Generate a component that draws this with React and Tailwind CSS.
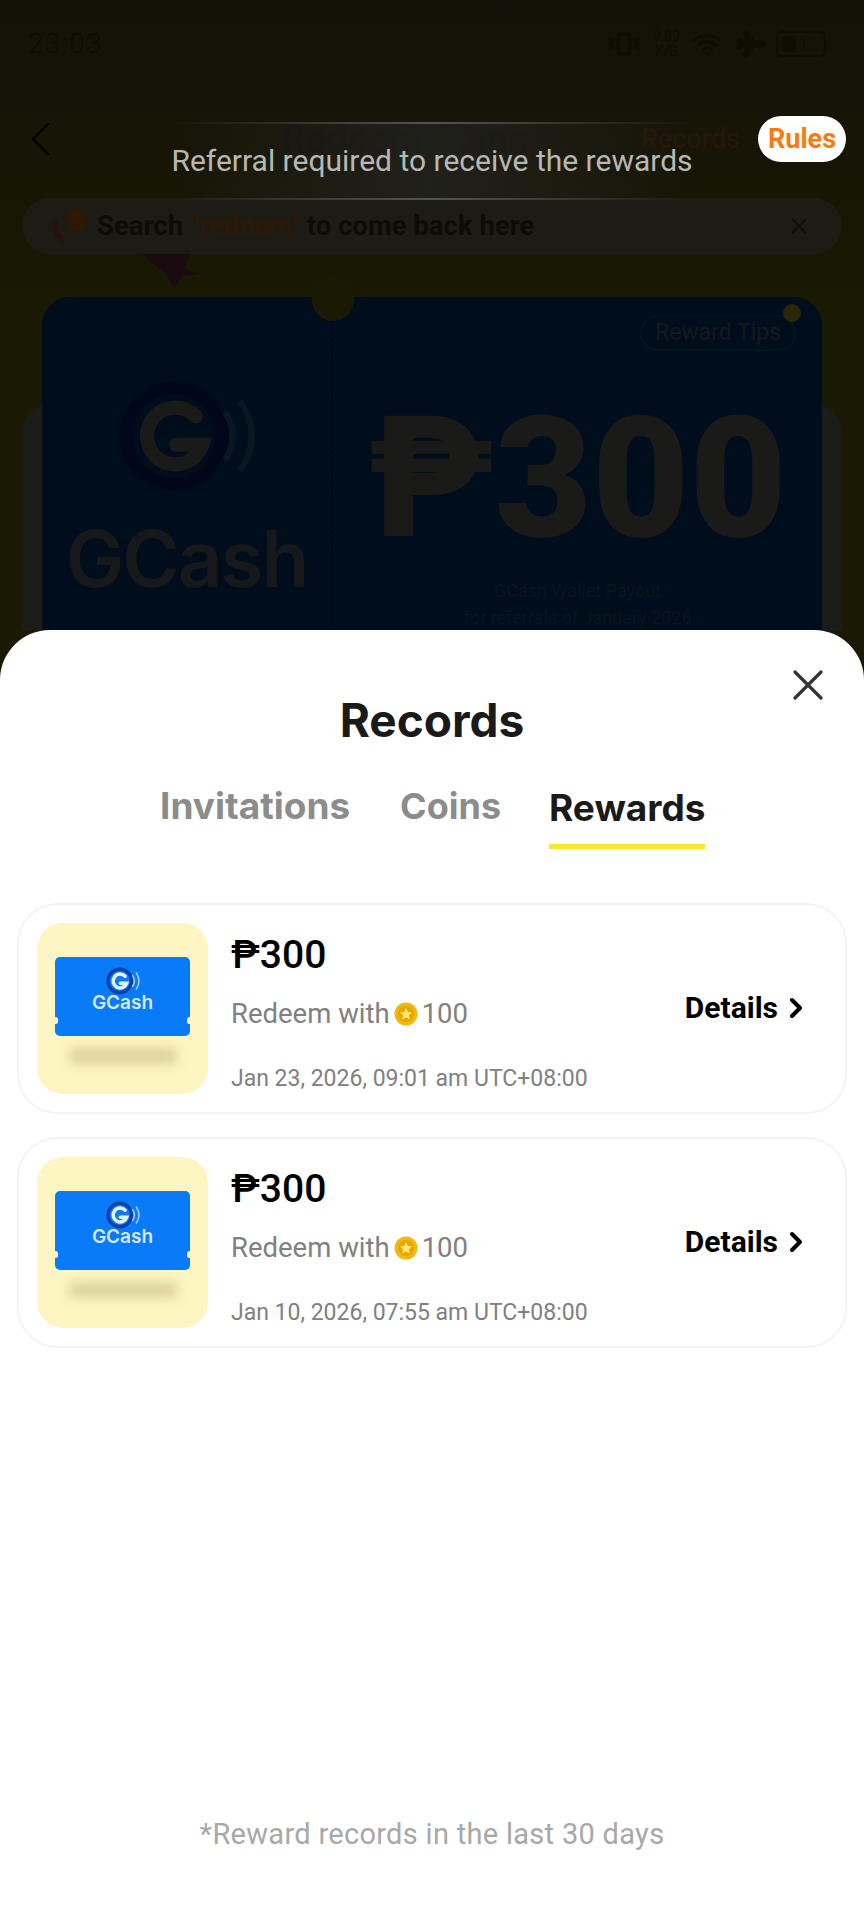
import { X, ChevronRight, Wifi, Plane, Vibrate } from "lucide-react";

const roboto = { fontFamily: "Roboto, sans-serif" };
const inter = { fontFamily: "Inter, sans-serif" };

function GLogo({ ring = "#00245a", mark = "#fff", waves = "#a9d0ff", className = "" }) {
  return (
    <svg viewBox="0 0 64 56" className={className} fill="none">
      <circle cx="26" cy="28" r="22" stroke={ring} strokeWidth="6" />
      <path d="M36 19a13 13 0 1 0 3 13H27" stroke={mark} strokeWidth="6.5" strokeLinecap="round" />
      <path d="M50 18a18 18 0 0 1 0 20" stroke={waves} strokeWidth="3" strokeLinecap="round" />
      <path d="M57 13a26 26 0 0 1 0 30" stroke={waves} strokeWidth="3" strokeLinecap="round" />
    </svg>
  );
}

function Coin() {
  return (
    <svg viewBox="0 0 24 24" className="mx-[4px] h-[24px] w-[24px] shrink-0">
      <circle cx="12" cy="12" r="11.5" fill="#f2b80f" />
      <circle cx="12" cy="12" r="8" fill="#e8a508" />
      <path d="M12 6l1.9 3.9 4.1.5-3 2.9.8 4.2-3.8-2-3.8 2 .8-4.2-3-2.9 4.1-.5z" fill="#ffe96b" />
    </svg>
  );
}

function Thumb() {
  return (
    <div className="flex h-[171px] w-[171px] shrink-0 flex-col items-center rounded-[26px] bg-[#fdf5c2] pt-[34px]">
      <div className="relative flex h-[79px] w-[135px] flex-col items-center rounded-[5px] bg-[#0a7bf8] pt-[9px]">
        <GLogo ring="#0b3fa8" mark="#e8f2ff" waves="#9cc9ff" className="h-[30px] w-[36px]" />
        <span className="-mt-[3px] text-[19px] leading-[20px] font-semibold text-[#d8e9ff]" style={inter}>
          GCash
        </span>
        <span className="absolute top-[60px] -left-[2px] h-[7px] w-[5px] rounded-full bg-[#fdf5c2]" />
        <span className="absolute top-[60px] -right-[2px] h-[7px] w-[5px] rounded-full bg-[#fdf5c2]" />
      </div>
      <div className="mt-[13px] h-[14px] w-[110px] rounded-full bg-[#d8cf98] blur-[6px]" />
    </div>
  );
}

function RecordCard({ date }) {
  return (
    <div className="flex h-[211px] items-center rounded-[40px] border-2 border-[#f4f4f4] pr-[33px] pl-[18px]">
      <Thumb />
      <div className="ml-[23px] flex h-[171px] flex-1 flex-col" style={roboto}>
        <div className="mt-[5px] text-[39px] leading-[54px] font-medium text-black">₱300</div>
        <div className="mt-[12px] flex items-center text-[27.5px] leading-[40px] text-[#808080]">
          Redeem with
          <Coin />
          100
        </div>
        <div className="mt-[30px] text-[23px] leading-[30px] text-[#808080]">{date}</div>
      </div>
      <div className="mb-[2px] flex items-center text-[30px] font-bold text-black" style={roboto}>
        Details
        <ChevronRight className="ml-[2px] h-[32px] w-[32px]" strokeWidth={3} />
      </div>
    </div>
  );
}

export default function App() {
  return (
    <div className="relative flex h-[1920px] w-[864px] flex-col overflow-hidden bg-[#1a1903]" style={roboto}>
      {/* dimmed page behind the sheet */}
      <div className="h-[630px] shrink-0 overflow-hidden bg-gradient-to-b from-[#131208] via-[#1a1903] to-[#1a1903]">
        <div className="flex h-[88px] items-center justify-between pr-[38px] pl-[28px] text-[#0e0d03]">
          <span className="text-[28px] font-light tracking-wider">23:03</span>
          <div className="flex items-center gap-[12px]">
            <Vibrate className="h-[34px] w-[34px]" strokeWidth={2.5} />
            <div className="text-center text-[14px] leading-[15px]">
              9.89
              <br />
              K/S
            </div>
            <Wifi className="h-[30px] w-[30px]" strokeWidth={2.5} />
            <Plane className="h-[30px] w-[30px] rotate-45" fill="#0e0d03" />
            <div className="flex h-[26px] w-[50px] items-center rounded-[6px] border-2 border-[#0e0d03] px-[4px] text-[15px]">
              <span className="mr-[3px] h-[16px] w-[14px] rounded-[2px] bg-[#0e0d03]" />1
            </div>
          </div>
        </div>

        <div className="mt-[14px] flex h-[74px] items-center pr-[18px] pl-[30px]">
          <svg viewBox="0 0 21 36" className="h-[36px] w-[21px]" fill="none" stroke="#000" strokeWidth="2.4">
            <path d="M19 2L3 18l16 16" />
          </svg>
          <div className="ml-[230px] text-[38px] font-bold whitespace-nowrap text-[#12110a]">Redeem Coins</div>
          <div className="ml-auto flex items-center gap-[18px]">
            <span className="text-[27px] font-medium text-[#241806]">Records</span>
            <div className="flex h-[46px] w-[88px] items-center justify-center rounded-full bg-white text-[27px] font-bold text-[#f57c0f]">
              Rules
            </div>
          </div>
        </div>

        <div className="mx-[22px] mt-[22px] flex h-[56px] items-center rounded-full bg-[#1c1c14] pr-[30px] pl-[26px] text-[27.5px] font-bold text-[#0d0c04]">
          <svg viewBox="0 0 44 42" className="mr-[9px] h-[38px] w-[40px]">
            <path d="M28 2c8 0 14 8 13 16-1 6-9 9-17 7C18 16 20 2 28 2z" fill="#2d1a05" />
            <path d="M6 16c-3 8 0 16 10 24 3-2 3-5 0-8C10 28 9 22 12 14z" fill="#2a0f0a" />
          </svg>
          Search&nbsp;<span className="text-[#2e1808]">"redeem"</span>&nbsp;to come back here
          <X className="ml-auto h-[26px] w-[26px] text-[#0f0f0a]" />
        </div>

        <div className="relative mx-[22px] mt-[43px] h-[400px]">
          <svg viewBox="0 0 60 34" className="absolute -top-[43px] left-[120px] h-[34px] w-[60px]">
            <path d="M0 0h48l-6 14 16 6-18 2-8 12-8-14z" fill="#1a0a12" />
          </svg>
          <div className="absolute inset-x-0 top-[106px] bottom-0 rounded-t-[30px] bg-[#1b1b18]" />
          <div className="absolute inset-x-[20px] top-0 bottom-0 flex overflow-hidden rounded-t-[28px] bg-[#000d1c]">
            <div className="flex w-[291px] flex-col items-center border-r-2 border-dashed border-[#00060f] pt-[78px]">
              <GLogo ring="#00071b" mark="#1a1a18" waves="#0a1722" className="h-[122px] w-[140px]" />
              <div className="mt-[18px] text-[78px] leading-[88px] font-semibold tracking-tight text-[#17181a]" style={inter}>
                GCash
              </div>
            </div>
            <div className="flex flex-1 flex-col items-center">
              <div className="mt-[18px] mr-[26px] flex h-[36px] w-[156px] items-center justify-center self-end rounded-full border-2 border-[#08131f] text-[23px] text-[#15181c]">
                Reward Tips
              </div>
              <div className="mt-[30px] text-[168px] leading-[196px] font-black text-[#1a1a18]">₱300</div>
              <div className="text-center text-[18px] leading-[27px] text-[#0c141d]">
                GCash Wallet Payout
                <br />
                for referrals of January 2026
              </div>
            </div>
          </div>
          <div className="absolute top-[-22px] left-[290px] h-[46px] w-[42px] rounded-full bg-[#1a1903]" />
          <div className="absolute top-[7px] right-[41px] h-[18px] w-[18px] rounded-full bg-[#2a2608]" />
        </div>
      </div>

      {/* toast over the page */}
      <div className="absolute top-[122px] left-[172px] flex h-[78px] w-[520px] flex-col items-center justify-between whitespace-nowrap text-[#b8b8b2]">
        <div className="h-[2px] w-full bg-gradient-to-r from-transparent via-[#55554f] to-transparent" />
        <div className="flex w-full flex-1 items-center justify-center bg-gradient-to-r from-transparent via-[#252525b0] to-transparent pb-[2px] text-[30px]">
          Referral required to receive the rewards
        </div>
        <div className="h-[2px] w-full bg-gradient-to-r from-transparent via-[#55554f] to-transparent" />
      </div>

      {/* bottom sheet */}
      <div className="relative flex flex-1 flex-col rounded-t-[50px] bg-white">
        <X className="absolute top-[29px] right-[30px] h-[52px] w-[52px] text-[#333]" strokeWidth={1.5} />
        <div className="pt-[62px] text-center text-[46px] leading-[56px] font-bold text-[#1a1a1a]" style={inter}>
          Records
        </div>
        <div className="mt-[33px] flex h-[64px] pl-[160px] text-[37px] font-bold" style={inter}>
          <span className="w-[240px] leading-[50px] text-[#8c8c8c]">Invitations</span>
          <span className="w-[149px] text-[36px] leading-[50px] text-[#8c8c8c]">Coins</span>
          <span className="h-[68px] border-b-[5px] border-[#fde52e] leading-[54px] text-[#1a1a1a]">Rewards</span>
        </div>
        <div className="mt-[58px] flex flex-col gap-[23px] px-[17px]">
          <RecordCard date="Jan 23, 2026, 09:01 am UTC+08:00" />
          <RecordCard date="Jan 10, 2026, 07:55 am UTC+08:00" />
        </div>
        <div className="mt-auto pb-[68px] text-center text-[29px] leading-[36px] tracking-[0.3px] text-[#a8a8a8]">
          *Reward records in the last 30 days
        </div>
      </div>
    </div>
  );
}
